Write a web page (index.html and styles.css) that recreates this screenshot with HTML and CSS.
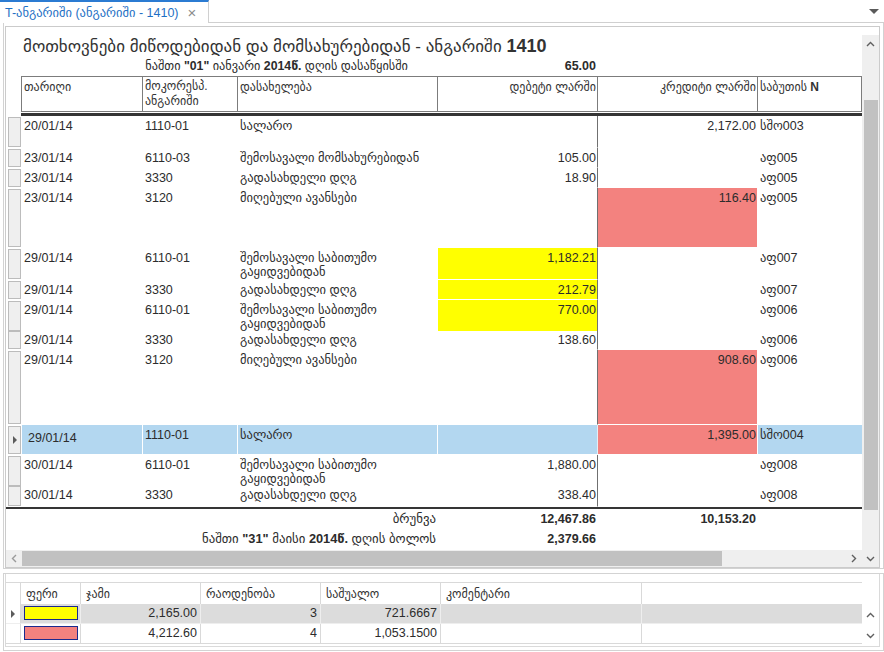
FILE: index.html
```html
<!DOCTYPE html>
<html lang="ka">
<head>
<meta charset="utf-8">
<title>T-ანგარიში</title>
<link rel="stylesheet" href="styles.css">
</head>
<body>
<div class="tabbar">
  <div class="tab"><span class="tab-title">T-ანგარიში (ანგარიში - 1410)</span><span class="tab-close">×</span></div>
  <div class="tab-fill"><span class="tab-menu"></span></div>
</div>

<div class="doc">
  <div class="report">
    <div class="sheet">
      <div class="title">მოთხოვნები მიწოდებიდან და მომსახურებიდან - ანგარიში <b>1410</b></div>
      <div class="opening">
        <div class="op-label">ნაშთი <b>"01"</b> იანვარი <b>2014წ.</b> დღის დასაწყისში</div>
        <div class="op-val">65.00</div>
      </div>
      <div class="head">
        <div class="h">თარიღი</div>
        <div class="h two">მოკორესპ.<br>ანგარიში</div>
        <div class="h">დასახელება</div>
        <div class="h r">დებეტი ლარში</div>
        <div class="h r">კრედიტი ლარში</div>
        <div class="h last">საბუთის <b>N</b></div>
      </div>
      <div class="head-sep"></div>
      <div class="rows">
        <div class="row h32"><div class="rh"></div><div class="c">20/01/14</div><div class="c">1110-01</div><div class="c">სალარო</div><div class="c num"></div><div class="c num cr">2,172.00</div><div class="c">სშო003</div></div>
        <div class="row h20"><div class="rh"></div><div class="c">23/01/14</div><div class="c">6110-03</div><div class="c">შემოსავალი მომსახურებიდან</div><div class="c num">105.00</div><div class="c num cr"></div><div class="c">აფ005</div></div>
        <div class="row h20"><div class="rh"></div><div class="c">23/01/14</div><div class="c">3330</div><div class="c">გადასახდელი დღგ</div><div class="c num">18.90</div><div class="c num cr"></div><div class="c">აფ005</div></div>
        <div class="row h60"><div class="rh"></div><div class="c">23/01/14</div><div class="c">3120</div><div class="c">მიღებული ავანსები</div><div class="c num"></div><div class="c num cr red">116.40</div><div class="c">აფ005</div></div>
        <div class="row h32"><div class="rh"></div><div class="c">29/01/14</div><div class="c">6110-01</div><div class="c">შემოსავალი საბითუმო<br>გაყიდვებიდან</div><div class="c num yel">1,182.21</div><div class="c num cr"></div><div class="c">აფ007</div></div>
        <div class="row h20"><div class="rh"></div><div class="c">29/01/14</div><div class="c">3330</div><div class="c">გადასახდელი დღგ</div><div class="c num yel">212.79</div><div class="c num cr"></div><div class="c">აფ007</div></div>
        <div class="row h30"><div class="rh"></div><div class="c">29/01/14</div><div class="c">6110-01</div><div class="c">შემოსავალი საბითუმო<br>გაყიდვებიდან</div><div class="c num yel">770.00</div><div class="c num cr"></div><div class="c">აფ006</div></div>
        <div class="row h20"><div class="rh"></div><div class="c">29/01/14</div><div class="c">3330</div><div class="c">გადასახდელი დღგ</div><div class="c num">138.60</div><div class="c num cr"></div><div class="c">აფ006</div></div>
        <div class="row h75"><div class="rh"></div><div class="c">29/01/14</div><div class="c">3120</div><div class="c">მიღებული ავანსები</div><div class="c num"></div><div class="c num cr red">908.60</div><div class="c">აფ006</div></div>
        <div class="row h30 sel"><div class="rh"><span class="arrow"></span></div><div class="c edit">29/01/14</div><div class="c">1110-01</div><div class="c">სალარო</div><div class="c num"></div><div class="c num cr red">1,395.00</div><div class="c">სშო004</div></div>
        <div class="row h30"><div class="rh"></div><div class="c">30/01/14</div><div class="c">6110-01</div><div class="c">შემოსავალი საბითუმო<br>გაყიდვებიდან</div><div class="c num">1,880.00</div><div class="c num cr"></div><div class="c">აფ008</div></div>
        <div class="row h22"><div class="rh"></div><div class="c">30/01/14</div><div class="c">3330</div><div class="c">გადასახდელი დღგ</div><div class="c num">338.40</div><div class="c num cr"></div><div class="c">აფ008</div></div>
      </div>
      <div class="foot-sep"></div>
      <div class="totals">
        <div class="t-label">ბრუნვა</div>
        <div class="t-val">12,467.86</div>
        <div class="t-val">10,153.20</div>
      </div>
      <div class="totals">
        <div class="t-label">ნაშთი <b>"31"</b> მაისი <b>2014წ.</b> დღის ბოლოს</div>
        <div class="t-val">2,379.66</div>
        <div class="t-val"></div>
      </div>
    </div>

    <div class="vscroll">
      <div class="sbtn"><svg width="9" height="6" viewBox="0 0 9 6"><polyline points="1,5 4.5,1.5 8,5" fill="none" stroke="#5f5f5f" stroke-width="1.4"/></svg></div>
      <div class="vthumb"></div>
      <div class="vspace"></div>
      <div class="sbtn"><svg width="9" height="6" viewBox="0 0 9 6"><polyline points="1,1 4.5,4.5 8,1" fill="none" stroke="#5f5f5f" stroke-width="1.4"/></svg></div>
    </div>

    <div class="hscroll">
      <div class="hbtn"><svg width="6" height="9" viewBox="0 0 6 9"><polyline points="5,1 1.5,4.5 5,8" fill="none" stroke="#9a9a9a" stroke-width="1.4"/></svg></div>
      <div class="hthumb"></div>
      <div class="hspace"></div>
      <div class="hbtn"><svg width="6" height="9" viewBox="0 0 6 9"><polyline points="1,1 4.5,4.5 1,8" fill="none" stroke="#5f5f5f" stroke-width="1.4"/></svg></div>
    </div>
  </div>
</div>

<div class="summary">
  <div class="sbox">
    <div class="stable">
      <div class="srow shead">
        <div class="s rhc"></div>
        <div class="s">ფერი</div>
        <div class="s">ჯამი</div>
        <div class="s">რაოდენობა</div>
        <div class="s">საშუალო</div>
        <div class="s">კომენტარი</div>
        <div class="s fill"></div>
      </div>
      <div class="srow scur">
        <div class="s rhc"><span class="arrow"></span></div>
        <div class="s sw"><span class="swatch yellow"></span></div>
        <div class="s n">2,165.00</div>
        <div class="s n">3</div>
        <div class="s n">721.6667</div>
        <div class="s"></div>
        <div class="s fill"></div>
      </div>
      <div class="srow">
        <div class="s rhc"></div>
        <div class="s sw"><span class="swatch salmon"></span></div>
        <div class="s n">4,212.60</div>
        <div class="s n">4</div>
        <div class="s n">1,053.1500</div>
        <div class="s"></div>
        <div class="s fill"></div>
      </div>
    </div>
    <div class="sscroll">
      <div class="sarrow"><svg width="9" height="6" viewBox="0 0 9 6"><polyline points="1,5 4.5,1.5 8,5" fill="none" stroke="#5f5f5f" stroke-width="1.4"/></svg></div>
      <div class="sarrow"><svg width="9" height="6" viewBox="0 0 9 6"><polyline points="1,1 4.5,4.5 8,1" fill="none" stroke="#5f5f5f" stroke-width="1.4"/></svg></div>
    </div>
  </div>
</div>
</body>
</html>
```

FILE: styles.css
```css
* { box-sizing: border-box; }
html, body { margin: 0; padding: 0; }
body {
  width: 884px;
  height: 652px;
  overflow: hidden;
  background: #fff;
  font-family: "Liberation Sans", "DejaVu Sans", sans-serif;
  font-size: 12.5px;
  color: #2c2c2c;
}
b { font-weight: bold; }

/* tab strip */
.tabbar { display: flex; height: 23px; }
.tab {
  width: 209px;
  height: 23px;
  border-top: 2px solid #2b7bd2;
  border-right: 1px solid #d0d0d0;
  display: flex;
  align-items: center;
  padding-left: 5px;
}
.tab-title { color: #1e6fc4; font-size: 12.5px; white-space: nowrap; }
.tab-close { color: #8c8c8c; font-size: 15px; margin-left: 9px; }
.tab-fill {
  flex: 1;
  border-bottom: 1px solid #d0d0d0;
  display: flex;
  justify-content: flex-end;
  align-items: center;
  padding-right: 5px;
}
.tab-menu {
  width: 0; height: 0;
  border-left: 5px solid transparent;
  border-right: 5px solid transparent;
  border-top: 5px solid #5a5a5a;
}

/* document frame */
.doc {
  margin-left: 3px;
  width: 881px;
  height: 546px;
  border: 1px solid #d2d2d2;
  border-top: none;
  padding: 3px 3px 1px 1px;
}
.report {
  height: 542px;
  border: 1px solid #cbcbcb;
  display: grid;
  grid-template-columns: 856px 1fr;
  grid-template-rows: 523px 1fr;
}
.sheet {
  grid-row: 1;
  grid-column: 1;
  padding-top: 9px;
  overflow: hidden;
}
.title {
  padding-left: 17px;
  font-size: 17px;
  line-height: 20px;
  height: 20px;
  color: #333;
  white-space: nowrap;
}
.title b { font-size: 18px; }
.opening {
  display: grid;
  grid-template-columns: 431px 160px;
  margin-top: 3px;
  height: 14px;
  line-height: 14px;
  font-size: 12.3px;
}
.op-label { text-align: right; padding-right: 29px; white-space: nowrap; }
.op-val { text-align: right; padding-right: 1px; font-weight: bold; font-size: 12.5px; }

.head {
  margin: 3px 0 0 15px;
  display: grid;
  grid-template-columns: 121px 95px 200px 160px 160px 105px;
  height: 36px;
  font-size: 12px;
}
.h {
  border-top: 1px solid #7c7c7c;
  border-bottom: 1px solid #7c7c7c;
  border-left: 1px solid #7c7c7c;
  padding: 3px 2px 0 2px;
  line-height: 14px;
  white-space: nowrap;
  color: #333;
}
.h.two { line-height: 15px; padding-top: 2px; }
.h.r { text-align: right; padding-right: 1px; }
.h.last { border-right: 1px solid #7c7c7c; }
.head-sep { margin: 1px 0 0 15px; height: 3px; background: #353535; }

.row {
  display: grid;
  grid-template-columns: 15px 121px 95px 200px 160px 160px 105px;
}
.h20 { height: 20px; }
.h22 { height: 22px; }
.h30 { height: 30px; }
.h32 { height: 32px; }
.h60 { height: 60px; }
.h75 { height: 75px; }
.rh {
  margin: 1px 0 1px 2px;
  border: 1px solid #bcbcbc;
  background: #efefef;
  display: flex;
  align-items: center;
  justify-content: center;
}
.arrow {
  width: 0; height: 0;
  border-top: 4px solid transparent;
  border-bottom: 4px solid transparent;
  border-left: 4px solid #5c5c5c;
}
.c {
  padding: 3px 2px 0 2px;
  border-left: 1px solid #fff;
  border-bottom: 1px solid #fff;
  line-height: 14px;
  white-space: nowrap;
}
.c.num { text-align: right; padding-right: 1px; }
.c.cr { border-left-color: #707070; }
.yel { background: #ffff00; }
.red { background: #f3827f; }
.sel .c { background: #b3d7f0; }
.sel .c.red { background: #f3827f; }
.sel .c.cr { border-left-color: #e4eef6; }
.c.edit { padding: 6px 0 0 6px; }

.foot-sep { height: 2px; background: #353535; }
.totals {
  display: grid;
  grid-template-columns: 431px 160px 160px;
  height: 20px;
  line-height: 20px;
}
.t-label { text-align: right; padding-right: 1px; white-space: nowrap; font-size: 12.8px; }
.t-val { text-align: right; padding-right: 1px; font-weight: bold; }

/* scrollbars */
.vscroll {
  grid-column: 2;
  grid-row: 1 / 3;
  margin-top: 8px;
  background: #efefef;
  display: flex;
  flex-direction: column;
}
.sbtn { height: 17px; display: flex; align-items: center; justify-content: center; }
.vthumb { margin: 48px 1px 0 2px; height: 410px; background: #c1c1c1; }
.vspace { flex: 1; }
.hscroll {
  grid-column: 1;
  grid-row: 2;
  background: #efefef;
  display: flex;
  align-items: stretch;
}
.hbtn { width: 16px; display: flex; align-items: center; justify-content: center; }
.hthumb { width: 700px; margin: 1px 0 1px 0; background: #c1c1c1; }
.hspace { flex: 1; }

/* summary grid */
.summary {
  margin: 4px 0 0 3px;
  width: 881px;
  height: 78px;
  border: 1px solid #d3d3d3;
  padding: 0 3px 3px 1px;
  font-size: 12.5px;
}
.sbox {
  height: 100%;
  border: 1px solid #dadada;
  border-top: none;
  padding-top: 8px;
  display: flex;
}
.stable { width: 856px; }
.srow {
  display: grid;
  grid-template-columns: 15px 60px 120px 120px 120px 201px 220px;
  height: 20px;
}
.srow.shead { height: 22px; font-size: 12px; }
.s {
  border-right: 1px solid #d9d9d9;
  border-bottom: 1px solid #d9d9d9;
  padding-left: 5px;
  line-height: 19px;
  white-space: nowrap;
}
.shead .s { border-top: 1px solid #d9d9d9; line-height: 22px; color: #333; }
.s.n { text-align: right; padding-right: 3px; }
.s.fill { border-right: none; }
.s.rhc { padding: 0; display: flex; align-items: center; justify-content: center; }
.scur .s { background: #dcdcdc; border-right-color: #eeeeee; border-bottom-color: #eeeeee; }
.scur .s.rhc { background: #fff; border-right-color: #d9d9d9; }
.s.sw { padding: 2px 0 0 3px; }
.swatch { display: block; width: 54px; height: 14px; border: 1px solid #1b2a8e; }
.yellow { background: #ffff00; }
.salmon { background: #f3827f; }
.sscroll { flex: 1; padding-top: 22px; display: flex; flex-direction: column; }
.sarrow { height: 22px; display: flex; align-items: center; justify-content: center; }
```
